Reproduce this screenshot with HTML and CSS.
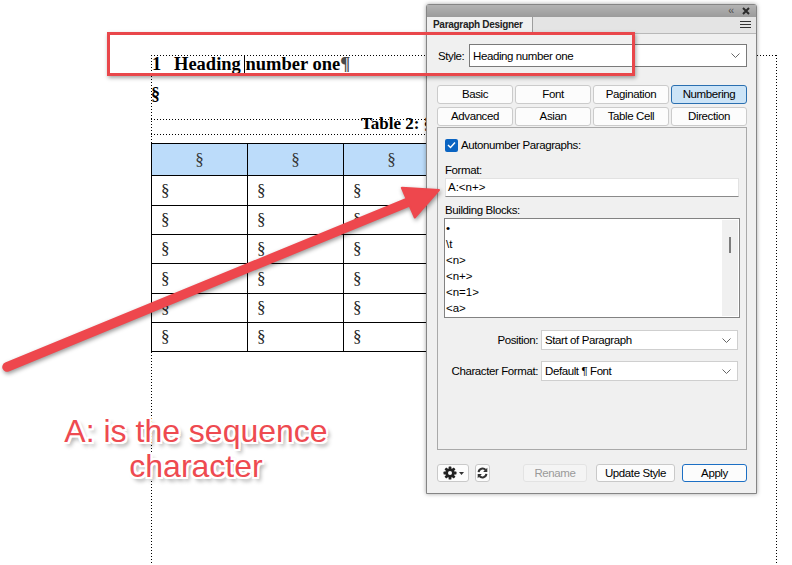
FILE: index.html
```html
<!DOCTYPE html>
<html>
<head>
<meta charset="utf-8">
<link rel="stylesheet" href="styles.css">
</head>
<body>
<div class="page">
  <div class="frame">
    <p class="heading"><span class="num">1</span>Heading <span class="caret"></span>number one<span class="pil">¶</span></p>
    <p class="sect">§</p>
    <div class="caption">Table 2: §</div>
    <table class="grid">
      <colgroup><col class="c1"><col class="c2"><col class="c3"><col class="c4"></colgroup>
      <tr class="hrow"><th>§</th><th>§</th><th>§</th><th>§</th></tr>
      <tr class="r30"><td>§</td><td>§</td><td>§</td><td>§</td></tr>
      <tr class="r29"><td>§</td><td>§</td><td>§</td><td>§</td></tr>
      <tr class="r29"><td>§</td><td>§</td><td>§</td><td>§</td></tr>
      <tr class="r30"><td>§</td><td>§</td><td>§</td><td>§</td></tr>
      <tr class="r29"><td>§</td><td>§</td><td>§</td><td>§</td></tr>
      <tr class="r29"><td>§</td><td>§</td><td>§</td><td>§</td></tr>
    </table>
  </div>
</div>

<div class="panel">
  <div class="titlebar">
    <span class="collapse">&lsaquo;&lsaquo;</span>
    <svg class="close" width="8" height="8" viewBox="0 0 8 8"><path d="M1 1 L7 7 M7 1 L1 7" stroke="#2b2b2b" stroke-width="2"/></svg>
  </div>
  <div class="tabrow">
    <div class="ptab">Paragraph Designer</div>
    <svg class="menu" width="11" height="8" viewBox="0 0 11 8"><path d="M0 0.5H11M0 3.5H11M0 6.5H11" stroke="#333" stroke-width="1"/></svg>
  </div>
  <div class="pbody">
    <div class="stylerow">
      <span class="slabel">Style:</span>
      <div class="select wide">
        <span>Heading number one</span>
        <svg class="chev" width="9" height="5" viewBox="0 0 9 5"><path d="M0.5 0.5 L4.5 4.5 L8.5 0.5" fill="none" stroke="#666" stroke-width="1"/></svg>
      </div>
    </div>
    <div class="tabs">
      <div class="tbtn">Basic</div>
      <div class="tbtn">Font</div>
      <div class="tbtn">Pagination</div>
      <div class="tbtn sel">Numbering</div>
      <div class="tbtn">Advanced</div>
      <div class="tbtn">Asian</div>
      <div class="tbtn">Table Cell</div>
      <div class="tbtn">Direction</div>
    </div>
    <div class="group">
      <div class="checkrow">
        <span class="cbox"><svg width="9" height="8" viewBox="0 0 9 8"><path d="M1 4 L3.5 6.5 L8 1.5" fill="none" stroke="#fff" stroke-width="1.4"/></svg></span>
        <span>Autonumber Paragraphs:</span>
      </div>
      <div class="flabel">Format:</div>
      <div class="input">A:&lt;n+&gt;</div>
      <div class="flabel bb">Building Blocks:</div>
      <div class="listbox">
        <div class="items">
          <div>•</div>
          <div>\t</div>
          <div>&lt;n&gt;</div>
          <div>&lt;n+&gt;</div>
          <div>&lt;n=1&gt;</div>
          <div>&lt;a&gt;</div>
        </div>
        <div class="sbar"><div class="thumb"></div></div>
      </div>
      <div class="frow first">
        <span class="rlabel">Position:</span>
        <div class="select narrow">
          <span>Start of Paragraph</span>
          <svg class="chev" width="9" height="5" viewBox="0 0 9 5"><path d="M0.5 0.5 L4.5 4.5 L8.5 0.5" fill="none" stroke="#666" stroke-width="1"/></svg>
        </div>
      </div>
      <div class="frow second">
        <span class="rlabel">Character Format:</span>
        <div class="select narrow">
          <span>Default ¶ Font</span>
          <svg class="chev" width="9" height="5" viewBox="0 0 9 5"><path d="M0.5 0.5 L4.5 4.5 L8.5 0.5" fill="none" stroke="#666" stroke-width="1"/></svg>
        </div>
      </div>
    </div>
    <div class="btnrow">
      <div class="btn gear">
        <svg width="14" height="14" viewBox="0 0 14 14">
          <g fill="#222">
            <rect x="5.6" y="0.5" width="2.8" height="13" rx="0.6"/>
            <rect x="5.6" y="0.5" width="2.8" height="13" rx="0.6" transform="rotate(45 7 7)"/>
            <rect x="5.6" y="0.5" width="2.8" height="13" rx="0.6" transform="rotate(90 7 7)"/>
            <rect x="5.6" y="0.5" width="2.8" height="13" rx="0.6" transform="rotate(135 7 7)"/>
            <circle cx="7" cy="7" r="4.6"/>
          </g>
          <circle cx="7" cy="7" r="2" fill="#fcfcfc"/>
        </svg>
        <svg width="5" height="3" viewBox="0 0 5 3"><path d="M0 0H5L2.5 3Z" fill="#333"/></svg>
      </div>
      <div class="btn refresh">
        <svg width="11" height="12" viewBox="0 0 11 12">
          <path d="M1.6 5.2 A4 4 0 0 1 8.6 3" fill="none" stroke="#333" stroke-width="2"/>
          <path d="M10.3 0.8 L10.3 5 L6.1 5 Z" fill="#333"/>
          <path d="M9.4 6.8 A4 4 0 0 1 2.4 9" fill="none" stroke="#333" stroke-width="2"/>
          <path d="M0.7 11.2 L0.7 7 L4.9 7 Z" fill="#333"/>
        </svg>
      </div>
      <div class="btn rename">Rename</div>
      <div class="btn update">Update Style</div>
      <div class="btn apply">Apply</div>
    </div>
  </div>
</div>

<div class="callout-box"></div>

<svg class="arrow" width="792" height="565" viewBox="0 0 792 565">
  <line x1="7" y1="367" x2="412" y2="200.6" stroke="#ee474d" stroke-width="9.5" stroke-linecap="round"/>
  <polygon points="439,190 414.8,217.5 401.8,187.8" fill="#ee474d" stroke="#ee474d" stroke-width="2" stroke-linejoin="round"/>
</svg>

<div class="note">A: is the sequence<br>character</div>
</body>
</html>
```

FILE: styles.css
```css
* { box-sizing: border-box; }
html, body { margin: 0; padding: 0; }
body {
  width: 792px;
  height: 565px;
  overflow: hidden;
  background: #fff;
  position: relative;
  font-family: "Liberation Sans", Arial, sans-serif;
}

/* ---------- document canvas ---------- */
.page {
  padding: 55px 0 0 151px;
  height: 565px;
}
.frame {
  width: 626px;
  height: 510px;
  background:
    repeating-linear-gradient(to right, #000 0 1px, transparent 1px 3px) top left / 100% 1px no-repeat,
    repeating-linear-gradient(to bottom, #000 0 1px, transparent 1px 3px) top left / 1px 100% no-repeat,
    repeating-linear-gradient(to bottom, #000 0 1px, transparent 1px 3px) top right / 1px 100% no-repeat;
}
.heading {
  margin: 0;
  padding-left: 1px;
  font: bold 18.5px/18px "Liberation Serif", "Times New Roman", serif;
  color: #000;
  white-space: nowrap;
}
.num { display: inline-block; width: 22px; }
.caret {
  display: inline-block;
  width: 1px;
  height: 18px;
  background: #000;
  vertical-align: -4px;
  margin-left: -1px;
}
.pil { color: #4a4a4a; }
.sect {
  margin: 11px 0 0 0;
  font: bold 18px/18px "Liberation Serif", "Times New Roman", serif;
}
.caption {
  margin-top: 16px;
  width: 384px;
  height: 16px;
  padding-left: 210px;
  font: bold 17px/10px "Liberation Serif", "Times New Roman", serif;
  white-space: nowrap;
  background:
    repeating-linear-gradient(to right, #000 0 1px, transparent 1px 3px) top left / 100% 1px no-repeat,
    repeating-linear-gradient(to right, #000 0 1px, transparent 1px 3px) bottom left / 100% 1px no-repeat;
}
.grid {
  margin-top: 8px;
  border-collapse: collapse;
  table-layout: fixed;
  width: 384px;
  font: 17px "Liberation Serif", "Times New Roman", serif;
  color: #222;
}
.c1, .c2, .c3, .c4 { width: 96px; }
.grid th, .grid td {
  border: 1px solid #000;
  padding: 0 0 0 9px;
  vertical-align: middle;
  text-align: left;
  font-weight: normal;
}
.grid th {
  background: #bcdcfa;
  text-align: center;
  padding: 0;
  color: #333;
}
.hrow { height: 32px; }
.r30 { height: 30px; }
.r29 { height: 29px; }

/* ---------- floating panel ---------- */
.panel {
  position: absolute;
  left: 426px;
  top: 4px;
  width: 331px;
  height: 490px;
  border: 1px solid #858585;
  border-radius: 3px 3px 0 0;
  background: #f0f0f0;
  box-shadow: 0 0 4px rgba(0,0,0,0.35);
  display: flex;
  flex-direction: column;
  font-size: 11.5px;
  letter-spacing: -0.4px;
  color: #000;
}
.titlebar {
  height: 12px;
  background: linear-gradient(#b3b3b3, #9b9b9b);
  display: flex;
  align-items: center;
  justify-content: flex-end;
  padding-right: 6px;
  gap: 9px;
}
.collapse {
  font-size: 10px;
  letter-spacing: -1px;
  color: #4a4a4a;
  line-height: 10px;
  margin-top: -1px;
}
.tabrow {
  height: 17px;
  display: flex;
  align-items: stretch;
  justify-content: space-between;
  background: #e4e4e4;
  border-bottom: 1px solid #b8b8b8;
}
.ptab {
  width: 106px;
  background: #f0f0f0;
  border-right: 1px solid #9d9d9d;
  font-weight: bold;
  font-size: 10px;
  letter-spacing: -0.3px;
  padding-left: 6px;
  line-height: 16px;
  color: #222;
  margin-bottom: -1px;
}
.menu { align-self: center; margin-right: 5px; }
.pbody {
  padding: 10px 9px 0 10px;
  display: flex;
  flex-direction: column;
}
.stylerow {
  display: flex;
  align-items: center;
  height: 23px;
}
.slabel { width: 32px; padding-left: 1px; }
.select {
  display: flex;
  align-items: center;
  justify-content: space-between;
  background: #fff;
  border: 1px solid #c4c4c4;
  padding: 0 6px 0 3px;
}
.select.wide {
  width: 278px;
  height: 23px;
  border-color: #7a7a7a;
}
.select.narrow {
  width: 197px;
  height: 20px;
  border-color: #cfcfcf;
}
.tabs {
  margin-top: 18px;
  display: grid;
  grid-template-columns: repeat(4, 76px);
  grid-auto-rows: 19px;
  column-gap: 2px;
  row-gap: 3px;
}
.tbtn {
  border: 1px solid #cbcbcb;
  border-radius: 3px;
  background: #fcfcfc;
  text-align: center;
  line-height: 17px;
}
.tbtn.sel {
  background: #cce4f7;
  border-color: #2a6fb0;
}
.group {
  margin-top: 1px;
  height: 323px;
  border: 1px solid #a9a9a9;
  background: #f0f0f0;
  padding: 10px 7px 0 7px;
  display: flex;
  flex-direction: column;
}
.checkrow {
  display: flex;
  align-items: center;
  height: 14px;
  gap: 3px;
}
.cbox {
  width: 13px;
  height: 13px;
  border-radius: 2px;
  background: #0a64c2;
  display: flex;
  align-items: center;
  justify-content: center;
}
.flabel {
  margin-top: 11px;
  line-height: 14px;
  height: 14px;
}
.flabel.bb { margin-top: 6px; }
.input {
  margin-top: 1px;
  height: 19px;
  width: 294px;
  background: #fff;
  border: 1px solid #e2e2e2;
  border-bottom-color: #8a8a8a;
  padding-left: 2px;
  line-height: 17px;
  letter-spacing: 0;
}
.listbox {
  margin-top: 1px;
  margin-left: -1px;
  width: 296px;
  height: 100px;
  background: #fff;
  border: 1px solid #828282;
  display: flex;
  justify-content: space-between;
  letter-spacing: 0;
}
.items { padding: 1px 0 0 1px; }
.items div { height: 16px; line-height: 16px; }
.sbar {
  width: 16px;
  margin: 1px 1px 1px 0;
  background: #f0f0f0;
  position: relative;
}
.thumb {
  position: absolute;
  left: 7px;
  top: 17px;
  width: 2px;
  height: 16px;
  background: #7d7d7d;
}
.frow {
  display: flex;
  align-items: center;
  height: 20px;
}
.frow.first { margin-top: 12px; }
.frow.second { margin-top: 11px; }
.rlabel {
  width: 96px;
  text-align: right;
  padding-right: 3px;
}
.btnrow {
  margin-top: 14px;
  height: 18px;
  display: flex;
  align-items: stretch;
}
.btn {
  border: 1px solid #c9c9c9;
  border-radius: 3px;
  background: #fcfcfc;
  display: flex;
  align-items: center;
  justify-content: center;
  line-height: 16px;
}
.btn.gear { width: 32px; gap: 2px; }
.btn.refresh { width: 15px; margin-left: 6px; }
.btn.rename {
  width: 64px;
  margin-left: auto;
  color: #9a9a9a;
  border-color: #e3e3e3;
  background: #f4f4f4;
}
.btn.update { width: 79px; margin-left: 9px; }
.btn.apply {
  width: 65px;
  margin-left: 7px;
  border: 1.5px solid #1c6fc4;
}

/* ---------- annotations ---------- */
.callout-box {
  position: absolute;
  left: 107px;
  top: 32px;
  width: 528px;
  height: 44px;
  border: 3px solid #e9474b;
  box-shadow: 1px 2px 4px rgba(0,0,0,0.35);
}
.arrow {
  position: absolute;
  left: 0;
  top: 0;
  pointer-events: none;
  filter: drop-shadow(1px 2px 2px rgba(0,0,0,0.4));
}
.note {
  position: absolute;
  left: 41px;
  top: 414px;
  width: 310px;
  text-align: center;
  font: 32px/35px "Liberation Sans", Arial, sans-serif;
  color: #ee4a50;
  text-shadow:
    1px 0 0 #fff, -1px 0 0 #fff, 0 1px 0 #fff, 0 -1px 0 #fff,
    2px 0 0 #fff, -2px 0 0 #fff, 0 2px 0 #fff, 0 -2px 0 #fff,
    1px 1px 0 #fff, -1px -1px 0 #fff, 1px -1px 0 #fff, -1px 1px 0 #fff,
    2px 2px 0 #fff, -2px -2px 0 #fff, 2px -2px 0 #fff, -2px 2px 0 #fff,
    3px 4px 4px rgba(0,0,0,0.45);
}
```
